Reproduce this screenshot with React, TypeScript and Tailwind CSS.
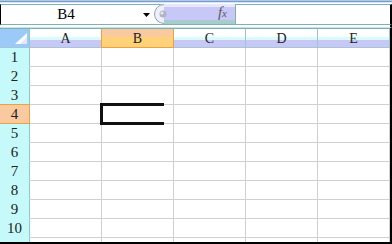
import React from 'react';

const COLS = ['A', 'B', 'C', 'D', 'E'];
const ROWS = [1, 2, 3, 4, 5, 6, 7, 8, 9, 10];

const ACTIVE_COL = 'B';
const ACTIVE_ROW = 4;

const serif = { fontFamily: '"Liberation Serif", "DejaVu Serif", serif' };

function ColHeader({ label }: { label: string }) {
  const active = label === ACTIVE_COL;
  const beforeActive = COLS[COLS.indexOf(label) + 1] === ACTIVE_COL;
  return (
    <div
      className={`w-[72px] h-[19px] flex items-end justify-center pb-[1px] border-r border-b text-[14px] leading-none text-[#222] ${
        active
          ? 'border-[#f0a040] bg-[linear-gradient(to_bottom,#f9c9a0_0px,#f9c9a0_8px,#ffd27a_8px,#ffd27a_18px)]'
          : beforeActive
          ? 'border-r-[#f0a040] border-b-[#a9c4d6] bg-[linear-gradient(to_bottom,#ffffff_0px,#ffffff_8px,#d8fcfc_8px,#d8fcfc_11px,#c8c8f6_11px,#c8c8f6_18px)]'
          : 'border-r-[#9cc6cc] border-b-[#a9c4d6] bg-[linear-gradient(to_bottom,#ffffff_0px,#ffffff_8px,#d8fcfc_8px,#d8fcfc_11px,#c8c8f6_11px,#c8c8f6_18px)]'
      }`}
    >
      {label}
    </div>
  );
}

function RowHeader({ n }: { n: number }) {
  const active = n === ACTIVE_ROW;
  const beforeActive = n === ACTIVE_ROW - 1;
  return (
    <div
      className={`w-[30px] h-[19px] flex items-center justify-center border-r border-b text-[15px] leading-none text-[#222] ${
        active
          ? 'bg-[#f9c9a0] border-[#f0a040]'
          : beforeActive
          ? 'bg-[#c6fafa] border-r-[#8cc8cc] border-b-[#f0a040]'
          : 'bg-[#c6fafa] border-r-[#8cc8cc] border-b-[#c6fafa]'
      }`}
    >
      {n}
    </div>
  );
}

function FxPill() {
  return (
    <div className="relative w-[81px] h-[20px] -mt-px rounded-l-full overflow-hidden bg-[linear-gradient(to_bottom,#e6e6fc_0px,#e6e6fc_3px,#c8c8f8_3px,#c8c8f8_16px,#a6cccc_16px,#a6cccc_20px)]">
      <svg className="absolute left-0 top-0" width="20" height="20" viewBox="0 0 20 20">
        <path d="M10 0.5 A9.5 9.5 0 0 0 10 19.5" fill="#eef0fc" stroke="#8c9cb0" strokeWidth="1" />
        <circle cx="9" cy="10" r="3.5" fill="#b0b4c0" />
        <circle cx="8" cy="9" r="1.5" fill="#e8e8f0" />
      </svg>
      <span className="absolute right-[8px] top-[1px] text-[15px] italic text-[#5a5a5a] leading-none">
        f<span className="text-[11px]">x</span>
      </span>
    </div>
  );
}

export default function App() {
  return (
    <div className="relative w-[392px] h-[244px] overflow-hidden bg-white" style={serif}>
      {/* window top edge */}
      <div className="h-px bg-[#a9c9ee]" />
      <div className="h-px bg-[#7c9cc6]" />
      <div className="h-px bg-[#d6e6f6]" />
      <div className="h-px bg-white" />

      {/* formula bar */}
      <div className="flex h-[21px] border-t border-b border-[#7fb0b4] border-l border-l-black border-r-2 border-r-black">
        <div className="w-[153px] flex items-center">
          <span className="w-[130px] text-center text-[15px] leading-none text-black">B4</span>
          <svg className="ml-[12px]" width="7" height="4" viewBox="0 0 7 4">
            <path d="M0 0 H7 L3.5 4 Z" fill="#000" />
          </svg>
        </div>
        <FxPill />
        <div className="flex-1 border-l border-[#7fb0b4]" />
      </div>
      <div className="h-[3px] bg-white border-b border-[#c4e4e8] border-r-2 border-r-black" />

      {/* sheet */}
      <div className="flex border-r-2 border-black">
        <div className="flex flex-col">
          <div className="flex border-t border-[#7fb0b4]">
            <div className="relative w-[30px] h-[19px] bg-[#9ccaf8] border-r border-b border-r-[#8cc8cc] border-b-[#a9c4d6]">
              <svg className="absolute right-[2px] bottom-[3px]" width="12" height="11" viewBox="0 0 12 11">
                <path d="M12 0 V11 H0 Z" fill="#ffffff" />
                <path d="M12 4 V11 H5 Z" fill="#dfe8f6" />
              </svg>
            </div>
            {COLS.map((c) => (
              <ColHeader key={c} label={c} />
            ))}
          </div>

          {ROWS.map((r) => (
            <div key={r} className="flex">
              <RowHeader n={r} />
              {COLS.map((c) => (
                <div key={c} className="w-[72px] h-[19px] border-r border-b border-[#d0d0d0]" />
              ))}
            </div>
          ))}

          {/* partially visible row 11 */}
          <div className="flex h-[4px]">
            <div className="w-[30px] bg-[#c6fafa] border-r border-[#8cc8cc]" />
            {COLS.map((c) => (
              <div key={c} className="w-[72px] border-r border-[#d0d0d0]" />
            ))}
          </div>
        </div>
      </div>
      <div className="h-[2px] bg-black" />

      {/* active cell frame */}
      <div className="absolute left-[100px] top-[103px] w-[64px] h-[22px] border-l-[3px] border-t-[3px] border-b-[3px] border-[#111]" />
    </div>
  );
}
